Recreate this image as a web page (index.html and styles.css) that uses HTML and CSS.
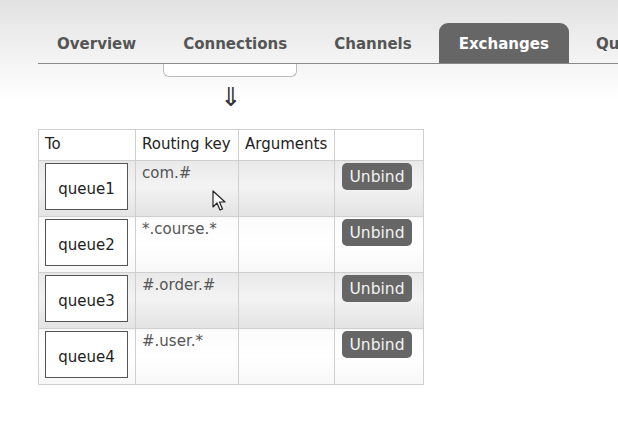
FILE: index.html
```html
<!DOCTYPE html>
<html lang="en">
<head>
    <meta charset="UTF-8">
    <title>Exchange bindings</title>
    <link rel="stylesheet" href="styles.css">
</head>
<body>
    <!-- Header / navigation -->
    <header class="header">
        <nav class="tabs">
            <a href="#" class="tab">Overview</a>
            <a href="#" class="tab">Connections</a>
            <a href="#" class="tab">Channels</a>
            <a href="#" class="tab active">Exchanges</a>
            <a href="#" class="tab">Queues</a>
        </nav>
        <div class="submenu"></div>
    </header>

    <main class="content">
        <div class="arrow">&#8659;</div>

        <!-- Bindings -->
        <div class="bindings-wrap">
            <table class="bindings">
                <thead>
                    <tr>
                        <th class="col-to">To</th>
                        <th class="col-key">Routing key</th>
                        <th class="col-args">Arguments</th>
                        <th class="col-action"></th>
                    </tr>
                </thead>
                <tbody>
                    <tr class="alt1">
                        <td><span class="queue">queue1</span></td>
                        <td class="key">com.#</td>
                        <td></td>
                        <td><button class="unbind">Unbind</button></td>
                    </tr>
                    <tr class="alt2">
                        <td><span class="queue">queue2</span></td>
                        <td class="key">*.course.*</td>
                        <td></td>
                        <td><button class="unbind">Unbind</button></td>
                    </tr>
                    <tr class="alt1">
                        <td><span class="queue">queue3</span></td>
                        <td class="key">#.order.#</td>
                        <td></td>
                        <td><button class="unbind">Unbind</button></td>
                    </tr>
                    <tr class="alt2">
                        <td><span class="queue">queue4</span></td>
                        <td class="key">#.user.*</td>
                        <td></td>
                        <td><button class="unbind">Unbind</button></td>
                    </tr>
                </tbody>
            </table>
            <svg class="cursor" width="14" height="22" viewBox="0 0 14 22">
                <path d="M1 1 L1 17 L5 13 L8 20 L10.5 19 L7.5 12 L13 12 Z" fill="#fff" stroke="#222" stroke-width="1.2" stroke-linejoin="round"/>
            </svg>
        </div>
    </main>
</body>
</html>
```

FILE: styles.css
```css
* {
    box-sizing: border-box;
}

body {
    margin: 0;
    background-color: #fff;
    font-family: "DejaVu Sans", Verdana, sans-serif;
    color: #222;
    overflow: hidden;
}

/* Header */
.header {
    height: 100px;
    padding-top: 23px;
    background: linear-gradient(#e2e2e2, #f2f2f2 55%, #fff);
}

.tabs {
    display: flex;
    gap: 7px;
    margin-left: 38px;
    border-bottom: 1px solid #8a8a8a;
    white-space: nowrap;
    overflow: hidden;
}

.tab {
    display: block;
    flex-shrink: 0;
    height: 40px;
    line-height: 40px;
    padding: 0 20px;
    font-family: "DejaVu Sans Condensed", "DejaVu Sans", sans-serif;
    font-weight: 700;
    font-size: 16.7px;
    color: #555;
    text-decoration: none;
    border-radius: 9px 9px 0 0;
}

.tab:first-child {
    margin-left: -1px;
}

.tab.active {
    background-color: #666;
    color: #fff;
}

.submenu {
    width: 134px;
    height: 13px;
    margin-left: 163px;
    background-color: #fff;
    border: 1px solid #bbb;
    border-top: none;
    border-radius: 0 0 6px 6px;
}

/* Content */
.content {
    padding-left: 38px;
}

.arrow {
    width: 385px;
    margin-top: -16px;
    padding-left: 182px;
    font-size: 26px;
    line-height: 26px;
    color: #333;
}

.bindings-wrap {
    position: relative;
    width: 386px;
    margin-top: 19px;
}

.bindings {
    border-collapse: collapse;
    width: 386px;
    font-size: 15px;
}

.bindings th,
.bindings td {
    border: 1px solid #cfcfcf;
    vertical-align: top;
    text-align: left;
}

.bindings th {
    height: 31px;
    padding: 5px 6px 0;
    font-weight: 400;
    color: #222;
    background-color: #fff;
}

.col-to { width: 97px; }
.col-key { width: 103px; }
.col-args { width: 96px; }

.bindings td {
    height: 56px;
    padding: 2px 6px;
}

.alt1 td {
    background: linear-gradient(#e9e9e9, #f3f3f3 45%, #e3e3e3);
}

.alt2 td {
    background: linear-gradient(#fbfbfb, #fff 50%, #f7f7f7);
}

.queue {
    display: block;
    width: 83px;
    height: 47px;
    padding-top: 2px;
    line-height: 47px;
    text-align: center;
    background-color: #fff;
    border: 1px solid #555;
    color: #222;
}

.bindings td.key {
    padding-top: 3px;
    color: #555;
}

.unbind {
    display: block;
    width: 70px;
    height: 27px;
    margin-left: 1px;
    padding: 0;
    border: none;
    border-radius: 5px;
    background-color: #666;
    color: #f2f2f2;
    font-family: "DejaVu Sans", Verdana, sans-serif;
    font-size: 15.5px;
}

.cursor {
    position: absolute;
    left: 174px;
    top: 61px;
}
```
